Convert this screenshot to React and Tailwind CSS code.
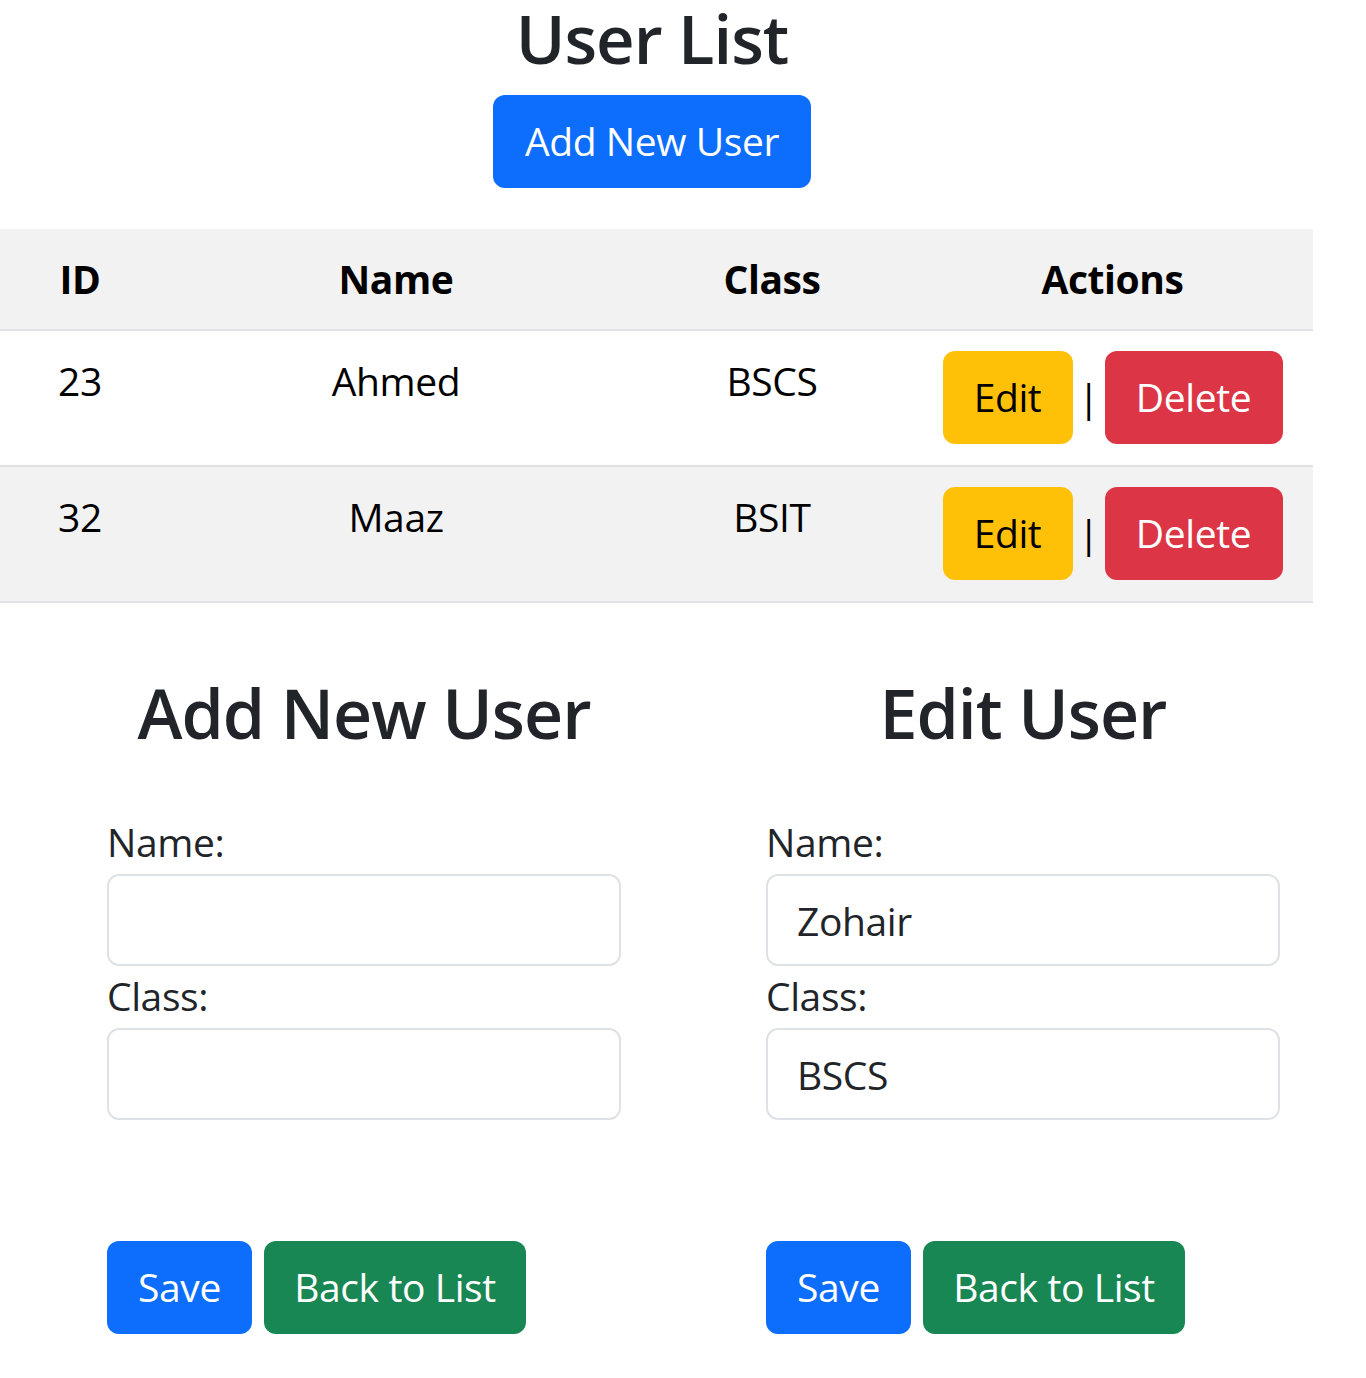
import { useState } from 'react';

const users = [
  { id: 23, name: 'Ahmed', cls: 'BSCS' },
  { id: 32, name: 'Maaz', cls: 'BSIT' },
];

function UserForm({ title, name, cls }) {
  const [n, setN] = useState(name);
  const [c, setC] = useState(cls);

  return (
    <div className="w-[514px]">
      <h2 className="text-center text-[68px] leading-[70px] font-semibold tracking-[-1px] text-[#212529]">{title}</h2>
      <div className="mt-[64px]">
        <label className="block leading-[60px] text-[#212529]">Name:</label>
        <input
          value={n}
          onChange={(e) => setN(e.target.value)}
          className="mt-[2px] block w-full h-[92px] border-2 border-[#dee2e6] rounded-[12px] px-[29px] text-[#212529] outline-none"
        />
        <label className="block leading-[60px] text-[#212529]">Class:</label>
        <input
          value={c}
          onChange={(e) => setC(e.target.value)}
          className="mt-[2px] block w-full h-[92px] border-2 border-[#dee2e6] rounded-[12px] px-[29px] text-[#212529] outline-none"
        />
      </div>
      <div className="mt-[121px] flex gap-[12px]">
        <button className="h-[93px] w-[145px] rounded-[12px] bg-[#0d6efd] text-white">Save</button>
        <button className="h-[93px] w-[262px] rounded-[12px] bg-[#198754] text-white">Back to List</button>
      </div>
    </div>
  );
}

export default function App() {
  return (
    <div className="min-h-screen bg-white pb-10 text-[39px] tracking-[-0.4px] font-['Open_Sans','Noto_Sans',sans-serif]">
      <div className="w-[1304px]">
        <h1 className="text-center text-[67px] leading-[76px] font-semibold tracking-[-1px] text-[#212529]">User List</h1>
        <div className="mt-[19px] flex justify-center">
          <button className="h-[93px] w-[318px] rounded-[12px] bg-[#0d6efd] text-white">Add New User</button>
        </div>
      </div>

      <div className="mt-[41px] w-[1313px] text-black">
        <div className="grid grid-cols-[160px_472px_280px_401px] bg-[#f2f2f2] border-b-2 border-[#dee2e6] font-bold">
          <div className="py-5 text-center leading-[60px]">ID</div>
          <div className="py-5 text-center leading-[60px]">Name</div>
          <div className="py-5 text-center leading-[60px]">Class</div>
          <div className="py-5 text-center leading-[60px]">Actions</div>
        </div>
        {users.map((u, i) => (
          <div
            key={u.id}
            className={`grid grid-cols-[160px_472px_280px_401px] border-b-2 border-[#dee2e6] ${
              i % 2 === 1 ? 'bg-[#f2f2f2]' : 'bg-white'
            }`}
          >
            <div className="pt-5 pb-[21px] text-center leading-[60px]">{u.id}</div>
            <div className="pt-5 pb-[21px] text-center leading-[60px]">{u.name}</div>
            <div className="pt-5 pb-[21px] text-center leading-[60px]">{u.cls}</div>
            <div className="pt-5 pb-[21px] flex justify-center items-center">
              <button className="h-[93px] w-[130px] rounded-[12px] bg-[#ffc107] text-black">Edit</button>
              <span className="w-[32px] text-center">|</span>
              <button className="h-[93px] w-[178px] rounded-[12px] bg-[#dc3545] text-white">Delete</button>
            </div>
          </div>
        ))}
      </div>

      <div className="mt-[75px] flex gap-[145px] pl-[107px]">
        <UserForm title="Add New User" name="" cls="" />
        <UserForm title="Edit User" name="Zohair" cls="BSCS" />
      </div>
    </div>
  );
}
